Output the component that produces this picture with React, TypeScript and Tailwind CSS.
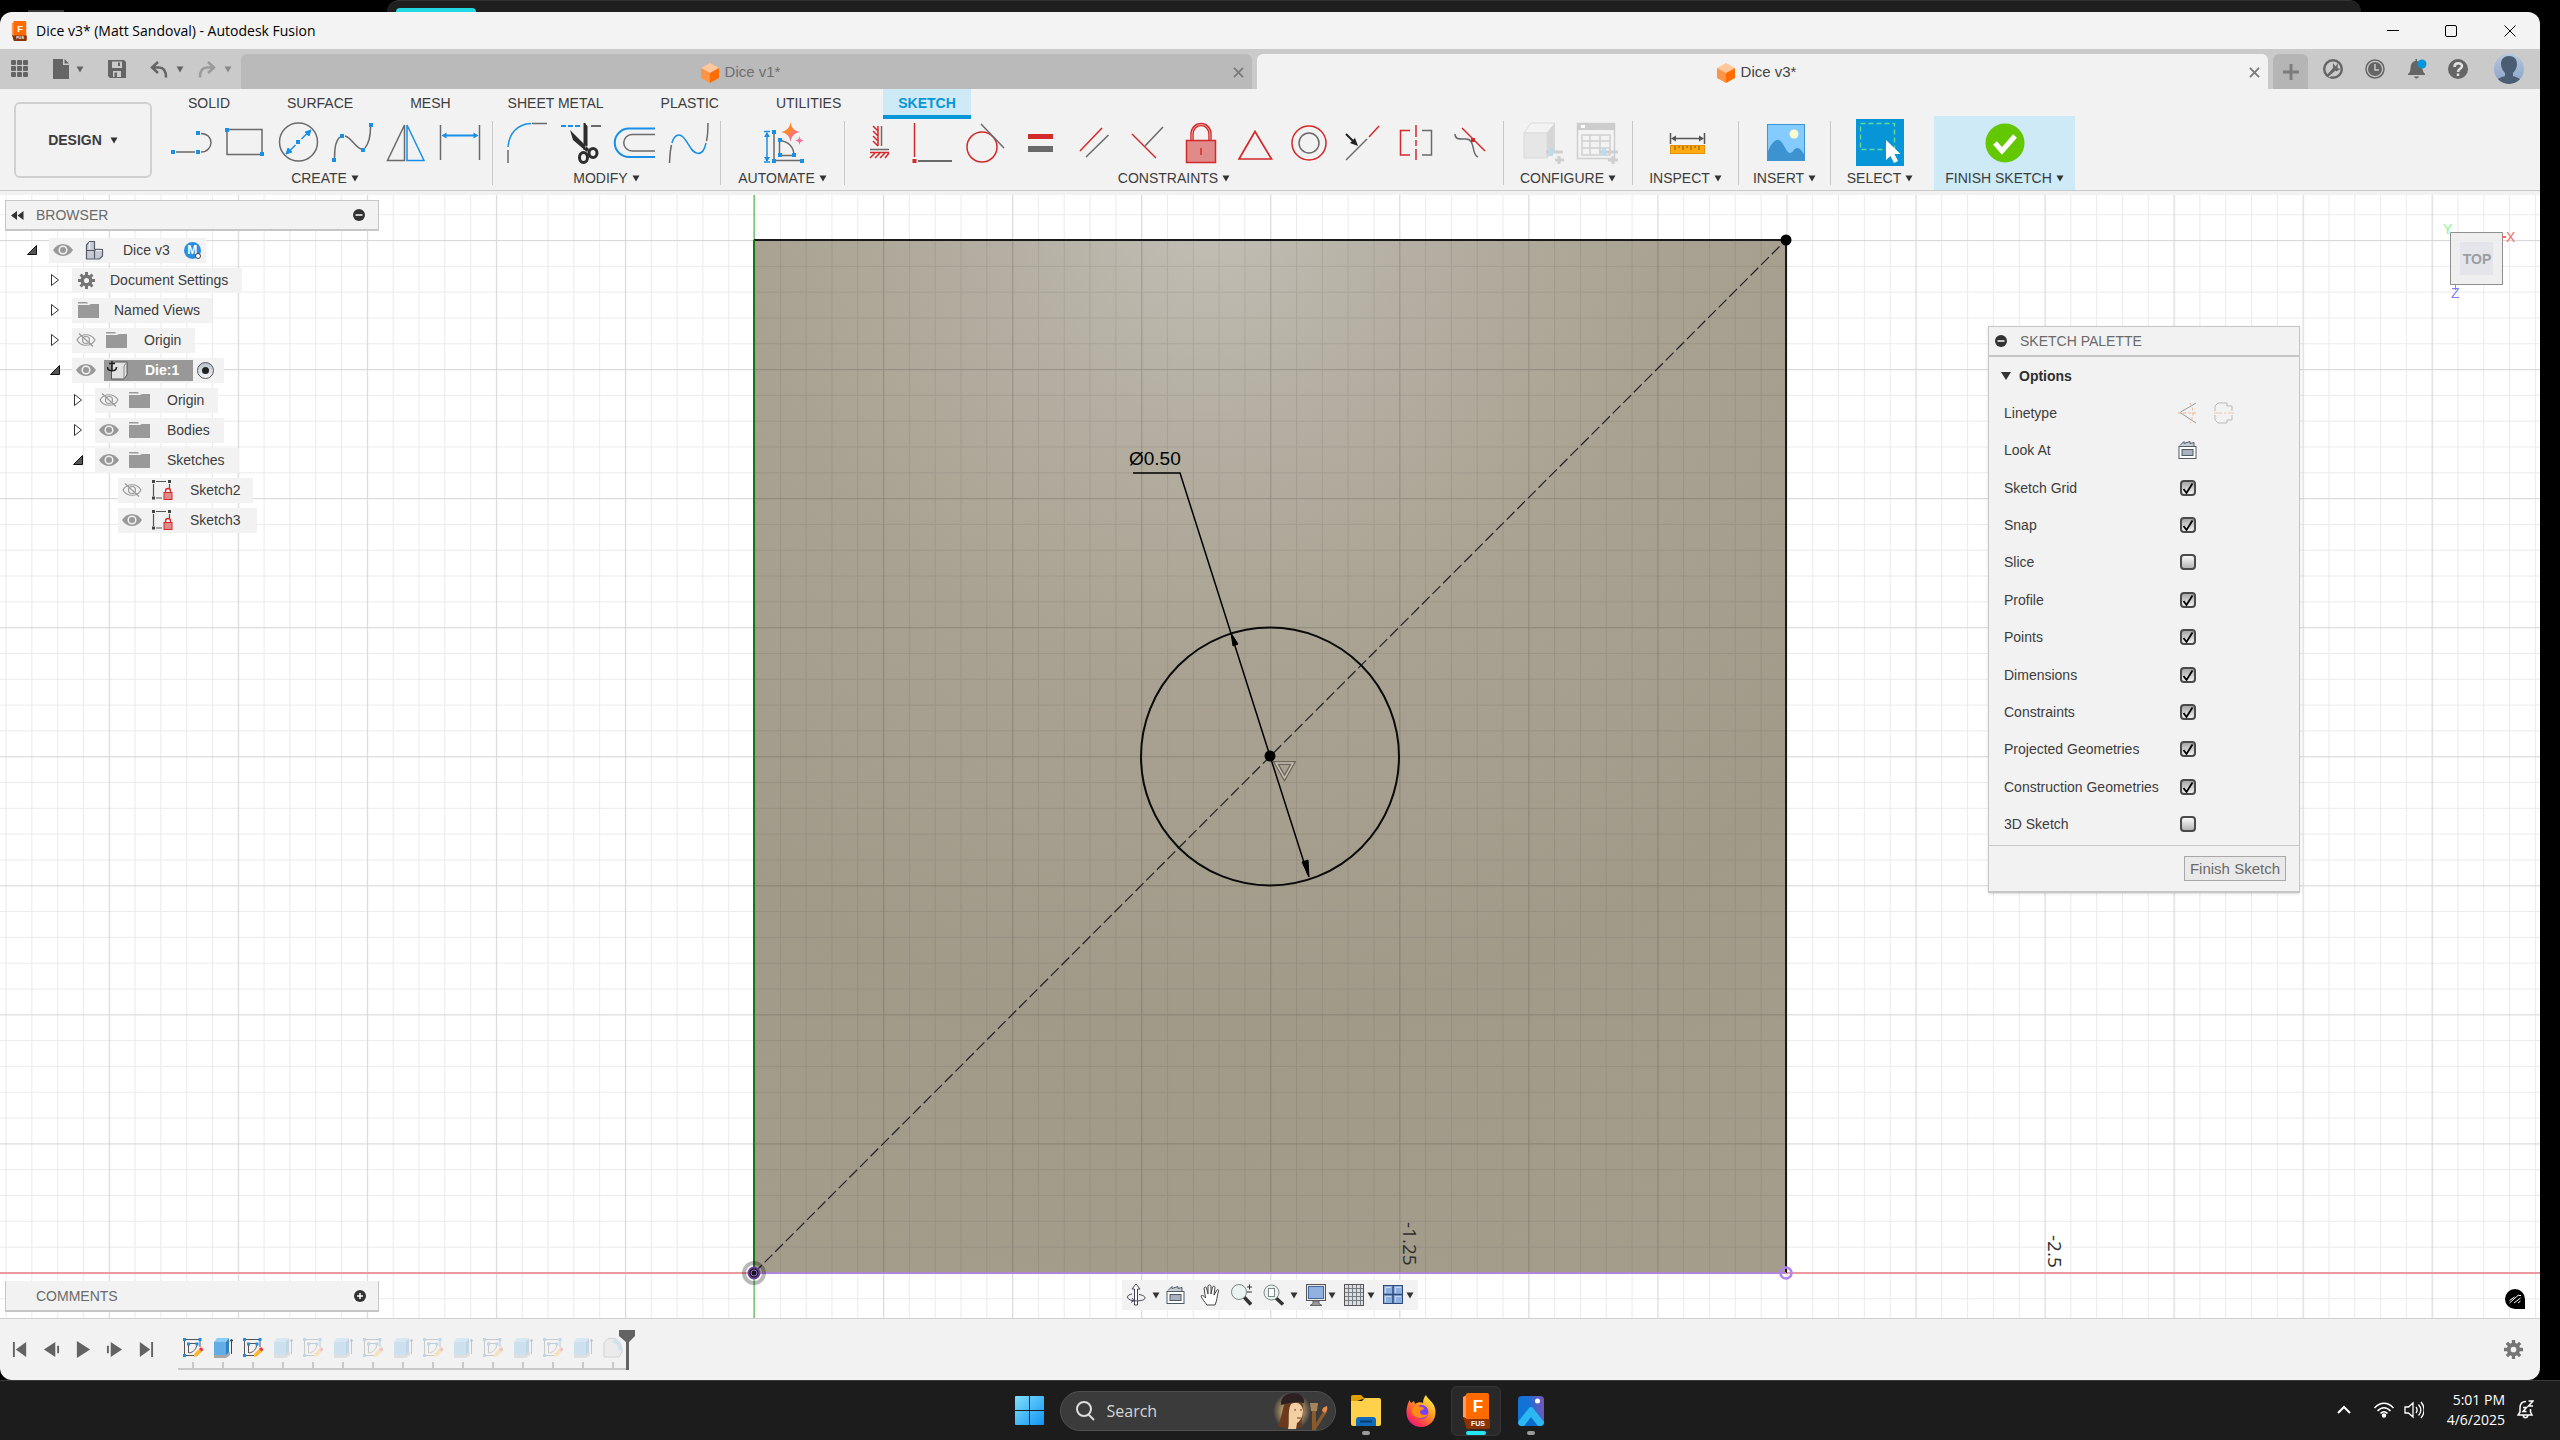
import React, { useState } from 'react';

type Icon = () => React.ReactElement;

const BLUE = '#1a8fe8';
const GRAY = '#6a6a6a';
const RED = '#d22a2a';

// ---------- shared bits ----------

const Caret: React.FC<{ className?: string }> = ({ className = 'text-[#333]' }) => (
  <svg viewBox="0 0 8 7" className={`h-[7px] w-2 shrink-0 ${className}`} aria-hidden="true">
    <path d="M0.5 0.5h7L4 6.5z" fill="currentColor" />
  </svg>
);

// Toolbar drawings share one 54x42 cell
const Cell: React.FC<{ children: React.ReactNode }> = ({ children }) => (
  <svg viewBox="0 0 54 42" className="h-[42px] w-[54px]" fill="none" strokeWidth="1.5" aria-hidden="true">
    {children}
  </svg>
);

const Dot: React.FC<{ x: number; y: number; fill?: string }> = ({ x, y, fill = BLUE }) => (
  <rect x={x - 2} y={y - 2} width="4" height="4" fill={fill} />
);

// ---------- toolbar icons ----------

const LineIcon: Icon = () => (
  <Cell>
    <path d="M11 30H30M36 30C42.500 30 46 25 46 20.500S42.500 11.500 36 11.500" stroke={GRAY} />
    <Dot x={8} y={30} /><Dot x={33} y={30} /><Dot x={33} y={11} />
  </Cell>
);

const RectIcon: Icon = () => (
  <Cell>
    <rect x="8" y="7.500" width="35" height="25" stroke={GRAY} />
    <Dot x={8} y={8} /><Dot x={43} y={32} />
  </Cell>
);

const CircleIcon: Icon = () => (
  <Cell>
    <circle cx="25.500" cy="20" r="19" stroke={GRAY} />
    <path d="M17 28.500L22.500 23M28.500 17L34 11.500" stroke={BLUE} />
    <path d="M13 32l2-6 4 4zM38 8l-2 6-4-4z" fill={BLUE} stroke={BLUE} strokeWidth="1" />
    <Dot x={25} y={20} />
  </Cell>
);

const SplineIcon: Icon = () => (
  <Cell>
    <path d="M7.500 36C7.500 27 9 18 13 15M18 14C25 16 27 24 34 27M38 26C42 21 43.500 13 43.500 5" stroke={GRAY} />
    <Dot x={7} y={38} /><Dot x={15} y={14} /><Dot x={36} y={28} /><Dot x={44} y={3} />
  </Cell>
);

const MirrorIcon: Icon = () => (
  <Cell>
    <path d="M23.500 3v35.500H6.500z" stroke={GRAY} />
    <path d="M26 3v35.500H43z" stroke={BLUE} />
  </Cell>
);

const DimensionIcon: Icon = () => (
  <Cell>
    <path d="M5.500 3v35M44.500 3v35" stroke={GRAY} />
    <path d="M9 13.500h32" stroke={BLUE} strokeWidth="2" />
    <path d="M6.500 13.500l5-3v6zM43.500 13.500l-5-3v6z" fill={BLUE} />
  </Cell>
);

const FilletIcon: Icon = () => (
  <Cell>
    <path d="M8 28v13M32 1.500H47" stroke={GRAY} />
    <path d="M8 25C9 12 17 2 31 1.500" stroke={BLUE} />
  </Cell>
);

const TrimIcon: Icon = () => (
  <Cell>
    <path d="M7 4h5M14 4h5M21 4h5" stroke={BLUE} strokeWidth="2" />
    <path d="M37 4h10" stroke={GRAY} strokeWidth="2" />
    <path d="M30.500 1l3 3v20l-3 3zM16 8l3 10 14 12 2-3z" fill="#2d2d2d" />
    <path d="M30.500 1v27" stroke="#2d2d2d" strokeWidth="2" />
    <ellipse cx="29.500" cy="35.500" rx="4" ry="5" stroke="#2d2d2d" strokeWidth="3" />
    <ellipse cx="39" cy="31" rx="4" ry="4.500" stroke="#2d2d2d" strokeWidth="3" />
  </Cell>
);

const OffsetIcon: Icon = () => (
  <Cell>
    <path d="M47 6.500H21a14 14 0 000 28.500H47" stroke={BLUE} strokeWidth="2" />
    <path d="M47 12.500H24a8 8 0 000 16.500H47" stroke={GRAY} />
  </Cell>
);

const ReshapeIcon: Icon = () => (
  <Cell>
    <path d="M7.500 41C8 33 8 29 9.500 23M44.500 19C46 12 46 8 46 1" stroke={GRAY} />
    <path d="M10 21C12 13 17 11 21 15C27 21 29 31 36 31.500C41 31.500 43 26 44 21" stroke={BLUE} />
  </Cell>
);

const AutomateIcon: Icon = () => (
  <Cell>
    <path d="M10 11v28M7 9.500h6M7 40h6" stroke={BLUE} />
    <path d="M10 10l3 5H7zM10 40l3-5H7z" fill={BLUE} />
    <path d="M17 12v26.500h26M22.500 19v14.500h14.500C37 25 31 19 22.500 18.500" stroke={GRAY} />
    <Dot x={17} y={10} /><Dot x={17} y={39} /><Dot x={45} y={39} />
    <Dot x={23} y={18} /><Dot x={23} y={33} /><Dot x={37} y={33} />
    <defs>
      <linearGradient id="spark" x1="0" x2="1" y1="0" y2="1">
        <stop offset="0.400" stopColor="#ff8a2b" />
        <stop offset="0.800" stopColor="#f75fb0" />
      </linearGradient>
    </defs>
    <path d="M33.500 0C34.500 6 37 8.500 43 10C37 11.500 34.500 14 33.500 20C32.500 14 30 11.500 24 10C30 8.500 32.500 6 33.500 0z" fill="url(#spark)" />
    <path d="M42.500 14C43 17 44 18 47 18.500C44 19 43 20 42.500 23C42 20 41 19 38 18.500C41 18 42 17 42.500 14z" fill="#f96a9d" />
  </Cell>
);

const HorizontalVerticalIcon: Icon = () => (
  <Cell>
    <path d="M26 4v20M21 4l5 5M21 9l5 5M21 14l5 5M21 19l5 5M18 30.500h19M23 31l-5 5M28 31l-5 5M33 31l-5 5M37 31l-4 5" stroke={RED} />
    <path d="M29.500 4v20M18 27.500h19" stroke={GRAY} />
  </Cell>
);

const CoincidentIcon: Icon = () => (
  <Cell>
    <path d="M8.500 1v34" stroke={RED} />
    <path d="M12 39h34" stroke={GRAY} strokeWidth="2" />
    <Dot x={8.5} y={39} fill={RED} />
  </Cell>
);

const TangentIcon: Icon = () => (
  <Cell>
    <circle cx="22" cy="25" r="15" stroke={RED} />
    <path d="M21 2L44 26" stroke={GRAY} />
  </Cell>
);

const EqualIcon: Icon = () => (
  <Cell>
    <rect x="14" y="12" width="25" height="5" fill={RED} />
    <rect x="14" y="24" width="25" height="6" fill={GRAY} />
  </Cell>
);

const ParallelIcon: Icon = () => (
  <Cell>
    <path d="M12 29L34 6" stroke={RED} />
    <path d="M18 35L40.500 13" stroke={GRAY} />
  </Cell>
);

const PerpendicularIcon: Icon = () => (
  <Cell>
    <path d="M10 12L34 36" stroke={RED} />
    <path d="M23 24L41 5" stroke={GRAY} />
  </Cell>
);

const LockIcon: Icon = () => (
  <Cell>
    <path d="M16 18V12a9 9.500 0 0118 0v6" stroke={RED} strokeWidth="3.500" />
    <path d="M16 18V12a9 9.500 0 0118 0v6" stroke="#f0a9a9" strokeWidth="1" />
    <rect x="10.500" y="18.500" width="29" height="22" fill="#e08a8a" stroke={RED} />
    <path d="M25 26v7" stroke={RED} />
  </Cell>
);

const MidpointIcon: Icon = () => (
  <Cell><path d="M25 9.500L41.500 37H9z" stroke={RED} strokeWidth="1.700" /></Cell>
);

const ConcentricIcon: Icon = () => (
  <Cell>
    <circle cx="25" cy="21" r="17" stroke={RED} />
    <circle cx="25" cy="21" r="10" stroke={GRAY} />
  </Cell>
);

const CollinearIcon: Icon = () => (
  <Cell>
    <path d="M41 4L31 15" stroke={RED} />
    <path d="M29 17L8 38" stroke={GRAY} />
    <path d="M8 12l7 7" stroke="#222" strokeWidth="2" />
    <path d="M20 24l-8-3 5-5z" fill="#222" />
  </Cell>
);

const SymmetryIcon: Icon = () => (
  <Cell>
    <path d="M18 8.500H8.500V33H18M24 3v12M24 18v6M24 27v11" stroke={RED} />
    <path d="M30 8.500h9.500V33H30" stroke={GRAY} />
  </Cell>
);

const CurvatureIcon: Icon = () => (
  <Cell>
    <path d="M9 12C9 18 14 17 20 17C30 17 25 33 32 35" stroke={GRAY} />
    <path d="M16 6L39 29" stroke={RED} />
    <Dot x={27} y={18} fill={RED} />
  </Cell>
);

const ConfigureIcon: Icon = () => (
  <Cell>
    <path d="M8 11L15 1h24l-8 10z" fill="#f3f3f3" stroke="#dadada" strokeWidth="1" />
    <path d="M31 11l8-10v28l-8 7z" fill="#d6d6d6" />
    <path d="M8 11h23v25H8z" fill="#e6e6e6" stroke="#dadada" strokeWidth="1" />
    <path d="M30 30h17M39 38h9M43 34v8" stroke="#cfcfcf" strokeWidth="3" />
    <path d="M35 26v8" stroke="#b9dcf2" strokeWidth="4" />
  </Cell>
);

const ConfigureTableIcon: Icon = () => (
  <Cell>
    <rect x="7.500" y="1.500" width="37" height="35" fill="#f3f3f3" stroke="#cfcfcf" />
    <path d="M7 1h38v7H7z" fill="#cdcdcd" />
    <path d="M11 3h4v3h-4z" fill="#fff" />
    <path d="M12 13h28v20H12zM12 19h28M12 26h28M20 13v20M30 13v20" stroke="#cfcfcf" />
    <path d="M29 30h19M38 38h10M43 34v8" stroke="#cfcfcf" strokeWidth="3" />
    <path d="M34 26v8" stroke="#b9dcf2" strokeWidth="4" />
  </Cell>
);

const InspectIcon: Icon = () => (
  <Cell>
    <rect x="10.500" y="23.500" width="34" height="8" fill="#ffab0f" stroke="#e39300" strokeWidth="1" />
    <path d="M15 24v4M19 24v2M23 24v4M27 24v2M31 24v4M35 24v2M39 24v4" stroke="#7a5200" strokeWidth="1" />
    <path d="M10.500 11v11M44.500 11v11M14 16.500h27" stroke="#555" />
    <path d="M11 16.500l5-3v6zM44 16.500l-5-3v6z" fill="#555" />
  </Cell>
);

const InsertIcon: Icon = () => (
  <Cell>
    <rect x="8.500" y="2.500" width="37" height="36" fill="#84ccff" stroke="#3f95d3" strokeWidth="1" />
    <circle cx="35" cy="12" r="4.500" fill="#fdfbd0" />
    <path d="M9 29C13 20 17 17 20 18C25 20 27 31 31 31C34 31 35 26 38 26C41 26 43 29 45 32V38H9z" fill="#3d93cf" />
  </Cell>
);

const SelectIcon: Icon = () => (
  <svg viewBox="0 0 48 47" className="h-[47px] w-12" fill="none" aria-hidden="true">
    <rect width="48" height="47" fill="#0696d7" />
    <rect x="4.500" y="4.500" width="34" height="26" stroke="#63d89b" strokeWidth="1.500" strokeDasharray="5 3" />
    <path d="M30 21v20l4.500-4 3.500 7 4-2-3.500-7h6z" fill="#fff" />
  </svg>
);

const FinishIcon: Icon = () => (
  <Cell>
    <circle cx="27" cy="21" r="19.500" fill="#63c702" />
    <path d="M17 21l7 8 13-15" stroke="#fff" strokeWidth="5" />
  </Cell>
);

interface Tool {
  name: string;
  icon: Icon;
}

interface Group {
  label: string;
  width: string;
  tools: Tool[];
}

const groups: Group[] = [
  {
    label: 'CREATE',
    width: 'w-[334px]',
    tools: [
      { name: 'Line', icon: LineIcon },
      { name: 'Rectangle', icon: RectIcon },
      { name: 'Circle', icon: CircleIcon },
      { name: 'Spline', icon: SplineIcon },
      { name: 'Mirror', icon: MirrorIcon },
      { name: 'Sketch Dimension', icon: DimensionIcon },
    ],
  },
  {
    label: 'MODIFY',
    width: 'w-[227px]',
    tools: [
      { name: 'Fillet', icon: FilletIcon },
      { name: 'Trim', icon: TrimIcon },
      { name: 'Offset', icon: OffsetIcon },
      { name: 'Reshape', icon: ReshapeIcon },
    ],
  },
  { label: 'AUTOMATE', width: 'w-[123px]', tools: [{ name: 'AutoConstrain', icon: AutomateIcon }] },
  {
    label: 'CONSTRAINTS',
    width: 'w-[658px]',
    tools: [
      { name: 'Horizontal/Vertical', icon: HorizontalVerticalIcon },
      { name: 'Coincident', icon: CoincidentIcon },
      { name: 'Tangent', icon: TangentIcon },
      { name: 'Equal', icon: EqualIcon },
      { name: 'Parallel', icon: ParallelIcon },
      { name: 'Perpendicular', icon: PerpendicularIcon },
      { name: 'Fix/Unfix', icon: LockIcon },
      { name: 'Midpoint', icon: MidpointIcon },
      { name: 'Concentric', icon: ConcentricIcon },
      { name: 'Collinear', icon: CollinearIcon },
      { name: 'Symmetry', icon: SymmetryIcon },
      { name: 'Curvature', icon: CurvatureIcon },
    ],
  },
  {
    label: 'CONFIGURE',
    width: 'w-[128px]',
    tools: [
      { name: 'Configure', icon: ConfigureIcon },
      { name: 'Configuration Table', icon: ConfigureTableIcon },
    ],
  },
  { label: 'INSPECT', width: 'w-[105px]', tools: [{ name: 'Measure', icon: InspectIcon }] },
  { label: 'INSERT', width: 'w-[91px]', tools: [{ name: 'Insert Canvas', icon: InsertIcon }] },
];

// ---------- title bar and document tabs ----------

const FusionLogo: React.FC<{ className: string; sub: string }> = ({ className, sub }) => (
  <svg viewBox="0 0 28 36" className={className} aria-hidden="true">
    <path d="M1 4L6 1v25l-5-2z" fill="#ff9a5a" />
    <path d="M4 2a2 2 0 012-2h19a2 2 0 012 2v25H4z" fill="#ff6b00" />
    <path d="M1 24l3 2h24v8a2 2 0 01-2 2H6a2 2 0 01-2-2z" fill="#8a3200" />
    <text x="16" y="19" textAnchor="middle" fontSize="17" fontWeight="700" fill="#fff" fontFamily="Liberation Sans, sans-serif">F</text>
    <text x="16" y="33" textAnchor="middle" fontSize="7" fontWeight="700" fill="#fff" fontFamily="Liberation Sans, sans-serif">{sub}</text>
  </svg>
);

const Cube: React.FC = () => (
  <svg viewBox="0 0 18 20" className="h-5 w-[18px]" aria-hidden="true">
    <path d="M9 0l9 5-9 5-9-5z" fill="#ffc79b" />
    <path d="M0 5l9 5v10l-9-5z" fill="#ff9447" />
    <path d="M18 5l-9 5v10l9-5z" fill="#ff6c00" />
  </svg>
);

const TitleBar: React.FC = () => (
  <header className="flex h-[37px] items-center bg-[#f3f3f3] pl-[10px] text-black">
    <FusionLogo className="h-5 w-[18px]" sub="FUS" />
    <h1 className="ml-2 flex-1 font-['Open_Sans',sans-serif] text-sm">Dice v3* (Matt Sandoval) - Autodesk Fusion</h1>
    <button aria-label="Minimize" className="flex h-full w-[58px] items-center justify-center">
      <span className="h-px w-3 bg-black" />
    </button>
    <button aria-label="Maximize" className="flex h-full w-[58px] items-center justify-center">
      <span className="h-3 w-3 rounded-xs border border-black" />
    </button>
    <button aria-label="Close" className="flex h-full w-[60px] items-center justify-center">
      <svg viewBox="0 0 12 12" className="h-3 w-3" stroke="#000" aria-hidden="true"><path d="M0.500 0.500l11 11M11.500 0.500l-11 11" /></svg>
    </button>
  </header>
);

const DocTab: React.FC<{ title: string; active?: boolean }> = ({ title, active }) => (
  <div className={`flex h-[35px] flex-1 items-center rounded-t-md px-2 pt-[2px] ${active ? 'bg-[#f2f2f2] text-[#444]' : 'bg-[#bababa] text-[#6f6f6f]'}`}>
    <button className="flex flex-1 items-center justify-center gap-[6px] text-[15px]">
      <Cube />
      {title}
    </button>
    <button aria-label={`Close ${title}`} className="flex w-3 justify-center">
      <svg viewBox="0 0 12 12" className="h-[11px] w-[11px]" stroke="#7a7a7a" strokeWidth="2" aria-hidden="true"><path d="M1 1l10 10M11 1L1 11" /></svg>
    </button>
  </div>
);

const QuickAccess: React.FC = () => (
  <div className="flex w-[241px] items-center pl-[10px] text-[#656565]">
    <button aria-label="Show data panel">
      <svg viewBox="0 0 20 20" className="h-5 w-5" fill="currentColor" aria-hidden="true">
        {[1, 7, 13].map((y) => [1, 7, 13].map((x) => <rect key={`${x}-${y}`} x={x} y={y} width="5" height="5" rx="1" />))}
      </svg>
    </button>
    <button aria-label="File" className="ml-[22px] flex items-center gap-[6px]">
      <svg viewBox="0 0 18 20" className="h-5 w-[18px]" fill="currentColor" aria-hidden="true">
        <path d="M1 0h10v6h6v14H1zM12.500 0L17 4.500h-4.500z" />
      </svg>
      <Caret className="text-[#656565]" />
    </button>
    <button aria-label="Save" className="ml-6">
      <svg viewBox="0 0 18 18" className="h-[18px] w-[18px]" aria-hidden="true">
        <path d="M0 0h16l2 2v16H2l-2-2z" fill="currentColor" />
        <path d="M4 1.500h10V8H4zM5 11h8v6H5z" fill="#cacaca" />
        <path d="M10 2.500h2V6h-2zM6.500 12.500H9V17H6.500z" fill="currentColor" />
      </svg>
    </button>
    <button aria-label="Undo" className="ml-6 flex items-center gap-2">
      <svg viewBox="0 0 18 17" className="h-[17px] w-[18px]" fill="none" stroke="currentColor" strokeWidth="2.500" aria-hidden="true">
        <path d="M8 1L2 6.500 8 12M3 6.500h6c5 0 7 4 7 10" />
      </svg>
      <Caret className="text-[#656565]" />
    </button>
    <button aria-label="Redo" className="ml-[14px] flex items-center gap-2 text-[#9a9a9a]">
      <svg viewBox="0 0 18 17" className="h-[17px] w-[18px]" fill="none" stroke="currentColor" strokeWidth="2.500" aria-hidden="true">
        <path d="M10 1l6 5.500L10 12M15 6.500H9c-5 0-7 4-7 10" />
      </svg>
      <Caret className="text-[#8a8a8a]" />
    </button>
  </div>
);

const AccountIcons: React.FC = () => (
  <div className="flex w-[232px] items-center justify-between pr-4 pl-[15px] text-[#656565]">
    <button aria-label="Extensions">
      <svg viewBox="0 0 20 20" className="h-5 w-5" fill="none" aria-hidden="true">
        <circle cx="10" cy="10" r="8.800" stroke="currentColor" strokeWidth="2.400" />
        <path d="M3 17l7-8V4l2.500 3.500L15 4l-0.500 5 3 1-5 3-7 5z" fill="currentColor" />
        <path d="M6 18l7-6" stroke="#cacaca" strokeWidth="1.500" />
      </svg>
    </button>
    <button aria-label="Job status">
      <svg viewBox="0 0 20 20" className="h-5 w-5" fill="none" aria-hidden="true">
        <circle cx="10" cy="10" r="9" stroke="currentColor" strokeWidth="1.500" />
        <circle cx="10" cy="10" r="7" fill="currentColor" />
        <path d="M10 5v6h4" stroke="#cacaca" strokeWidth="1.500" />
      </svg>
    </button>
    <button aria-label="Notifications">
      <svg viewBox="0 0 20 20" className="h-5 w-5" aria-hidden="true">
        <path d="M1 15c3-2 2-5 3-9 1-3 3-4 4.500-4V0H10v2c3 0 4.500 3 5 6s1 5 3 7v1H1zM7 17.500h5c-1 2.500-4 2.500-5 0z" fill="currentColor" />
        <circle cx="15" cy="5" r="4.500" fill="#0696d7" />
      </svg>
    </button>
    <button aria-label="Help">
      <svg viewBox="0 0 20 20" className="h-5 w-5" fill="none" aria-hidden="true">
        <circle cx="10" cy="10" r="10" fill="currentColor" />
        <path d="M6.500 8c0-5 7.500-4.500 7.500-1 0 3-4 2.500-4 6M10 14.500V17" stroke="#e2e2e2" strokeWidth="2.500" />
      </svg>
    </button>
    <button aria-label="Profile" className="ml-1">
      <svg viewBox="0 0 30 30" className="h-[30px] w-[30px]" aria-hidden="true">
        <defs>
          <linearGradient id="avatar" x1="0" x2="0" y1="0" y2="1">
            <stop offset="0" stopColor="#b3c6e0" />
            <stop offset="1" stopColor="#8ba3c6" />
          </linearGradient>
          <clipPath id="round"><circle cx="15" cy="15" r="15" /></clipPath>
        </defs>
        <g clipPath="url(#round)">
          <rect width="30" height="30" fill="url(#avatar)" />
          <path d="M15 2c5 0 8 3 8 8 0 4-2 7-4 9v3c3 1 7 2 8 5v5H3v-5c1-3 5-4 8-5v-3C9 17 7 14 7 10c0-5 3-8 8-8z" fill="#4b5d73" />
        </g>
      </svg>
    </button>
  </div>
);

const TabBar: React.FC = () => (
  <div className="flex h-10 items-stretch bg-[#cacaca]">
    <QuickAccess />
    <div className="flex flex-1 items-end gap-[5px]">
      <DocTab title="Dice v1*" />
      <DocTab title="Dice v3*" active />
      <button aria-label="New tab" className="flex h-[35px] w-[35px] items-center justify-center rounded-t-md bg-[#b5b5b5]">
        <svg viewBox="0 0 16 16" className="h-4 w-4" stroke="#7c7c7c" strokeWidth="3" aria-hidden="true"><path d="M8 0v16M0 8h16" /></svg>
      </button>
    </div>
    <AccountIcons />
  </div>
);

// ---------- ribbon ----------

const ribbonTabs = ['SOLID', 'SURFACE', 'MESH', 'SHEET METAL', 'PLASTIC', 'UTILITIES'];

const GroupLabel: React.FC<{ label: string }> = ({ label }) => (
  <button className="flex h-[22px] items-center gap-1 whitespace-nowrap">
    {label}
    <Caret />
  </button>
);

const Ribbon: React.FC = () => (
  <div className="h-[106px] border-b-4 border-[#f2f2f2] bg-[#f2f2f2] text-sm text-[#3c3c3c]">
    <div className="flex h-full border-b border-[#c8c8c8]">
      <button className="mt-[13px] ml-[14px] flex h-[76px] w-[138px] items-center justify-center gap-2 rounded-md border-2 border-[#d0d0d0] font-bold">
        DESIGN
        <Caret />
      </button>
      <div className="flex flex-1 flex-col">
        <nav className="flex h-[27px] shrink-0 items-start gap-[27px] pl-[21px]">
          {ribbonTabs.map((tab) => (
            <button key={tab} className="h-[30px] px-[15px] pb-[2px]">{tab}</button>
          ))}
          <button className="h-[30px] border-b-4 border-[#0696d7] bg-[#cdeaf6] px-[15px] pt-[2px] font-bold text-[#0696d7]">SKETCH</button>
        </nav>
        <div className="flex flex-1 pl-[6px]">
          {groups.map((group) => (
            <div key={group.label} className="flex">
              <div className={`flex flex-col items-center pt-[2px] ${group.width}`}>
                <div className="flex h-[49px] items-center pl-[3px]">
                  {group.tools.map(({ name, icon: ToolIcon }) => (
                    <button key={name} aria-label={name}><ToolIcon /></button>
                  ))}
                </div>
                <GroupLabel label={group.label} />
              </div>
              <span className="h-16 w-px self-center bg-[#c8c8c8]" />
            </div>
          ))}
          <div className="flex w-[103px] flex-col items-center pt-[2px] pr-[5px]">
            <button aria-label="Select" className="flex h-[49px] items-center"><SelectIcon /></button>
            <GroupLabel label="SELECT" />
          </div>
          <div className="flex w-[141px] flex-col items-center bg-[#cdeaf6] pt-[2px]">
            <button aria-label="Finish Sketch" className="flex h-[49px] items-center"><FinishIcon /></button>
            <GroupLabel label="FINISH SKETCH" />
          </div>
        </div>
      </div>
    </div>
  </div>
);

// ---------- browser tree ----------

const Eye: React.FC<{ off?: boolean }> = ({ off }) => (
  <svg viewBox="0 0 20 14" className="h-[14px] w-5" aria-hidden="true">
    {off ? (
      <g fill="none" stroke="#999" strokeWidth="1.200">
        <path d="M1 7C5 0 15 0 19 7C15 14 5 14 1 7zM3 0.500l14 13" />
        <circle cx="10" cy="7" r="3.500" />
      </g>
    ) : (
      <>
        <path d="M0 7C5-1 15-1 20 7C15 15 5 15 0 7z" fill="#999" />
        <circle cx="10" cy="7" r="3.800" fill="none" stroke="#f2f2f2" strokeWidth="1.500" />
      </>
    )}
  </svg>
);

const GearIcon: React.FC<{ className: string }> = ({ className }) => (
  <svg viewBox="0 0 20 20" className={className} fill="none" stroke="#757575" aria-hidden="true">
    <circle cx="10" cy="10" r="5" strokeWidth="4" />
    <path d="M10 0v4M10 16v4M0 10h4M16 10h4M3 3l2.800 2.800M14.200 14.200L17 17M3 17l2.800-2.800M14.200 5.800L17 3" strokeWidth="3.500" />
  </svg>
);

const FolderIcon: Icon = () => (
  <svg viewBox="0 0 21 16" className="h-4 w-[21px]" fill="#999" aria-hidden="true">
    <path d="M0 0h9l1 1.500H0zM0 3h11l2-1h8v14H0z" />
  </svg>
);

const ComponentIcon: Icon = () => (
  <svg viewBox="0 0 20 20" className="h-5 w-5" stroke="#555b66" strokeWidth="1.200" aria-hidden="true">
    <path d="M1.500 5l3-3.500h5V9l8 0.500V16l-3 3h-13z" fill="#c6cad3" />
    <path d="M1.500 10.500h8M9.500 18.500V10l8-0.500" fill="none" />
    <path d="M4.500 2v7M11 10.500h6" stroke="#f2f4f8" />
  </svg>
);

const SketchLockIcon: Icon = () => (
  <svg viewBox="0 0 21 20" className="h-5 w-[21px]" fill="none" aria-hidden="true">
    <path d="M4 1.500h10M1.500 4v12M4 18h6M17.500 4v5" stroke="#555" strokeWidth="1.200" />
    <path d="M0 0h3v3H0zM16 0h3v3h-3zM0 16.500h3v3H0z" fill="#444" />
    <path d="M13.500 13v-2a2.500 2.500 0 015 0v2" stroke={RED} strokeWidth="1.300" />
    <rect x="12" y="12.500" width="8" height="7" fill="#e08a8a" stroke={RED} />
  </svg>
);

const AnchorIcon: Icon = () => (
  <svg viewBox="0 0 21 20" className="h-5 w-[21px]" fill="none" aria-hidden="true">
    <path d="M4.500 5L8 2h12v13l-3 4H4.500z" fill="#e2e2e2" stroke="#555" />
    <path d="M17 19V6l3-4" stroke="#888" />
    <path d="M5 1v10M2 3.500h6M0.500 7c0 5 9 5 9 0" stroke="#222" strokeWidth="1.500" />
  </svg>
);

interface Node {
  name: string;
  indent: string;
  open?: boolean;
  leaf?: boolean;
  eye?: 'on' | 'off';
  icon: Icon;
  gap: string;
  end: string;
}

const SettingsIcon: Icon = () => <GearIcon className="h-[17px] w-[17px]" />;

const nodes: Node[] = [
  { name: 'Document Settings', indent: 'pl-[45px]', icon: SettingsIcon, gap: 'gap-[15px]', end: 'pr-[14px]' },
  { name: 'Named Views', indent: 'pl-[45px]', icon: FolderIcon, gap: 'gap-[15px]', end: 'pr-[12px]' },
  { name: 'Origin', indent: 'pl-[45px]', eye: 'off', icon: FolderIcon, gap: 'gap-[17px]', end: 'pr-[14px]' },
  { name: 'Die:1', indent: 'pl-[45px]', open: true, eye: 'on', icon: AnchorIcon, gap: 'gap-[17px]', end: 'pr-[10px]' },
  { name: 'Origin', indent: 'pl-[68px]', eye: 'off', icon: FolderIcon, gap: 'gap-[17px]', end: 'pr-[14px]' },
  { name: 'Bodies', indent: 'pl-[68px]', eye: 'on', icon: FolderIcon, gap: 'gap-[17px]', end: 'pr-[14px]' },
  { name: 'Sketches', indent: 'pl-[68px]', open: true, eye: 'on', icon: FolderIcon, gap: 'gap-[17px]', end: 'pr-[14px]' },
  { name: 'Sketch2', indent: 'pl-[91px]', leaf: true, eye: 'off', icon: SketchLockIcon, gap: 'gap-[17px]', end: 'pr-[12px]' },
  { name: 'Sketch3', indent: 'pl-[91px]', leaf: true, eye: 'on', icon: SketchLockIcon, gap: 'gap-[17px]', end: 'pr-[16px]' },
];

const Twisty: React.FC<{ open?: boolean }> = ({ open }) => (
  <svg viewBox="0 0 10 12" className="h-3 w-[10px]" aria-hidden="true">
    {open ? <path d="M9.500 1.500v9h-9z" fill="#555" stroke="#111" /> : <path d="M1.500 0.500v11L8.500 6z" fill="#fff" stroke="#333" />}
  </svg>
);

const TreeRow: React.FC<{ node: Node }> = ({ node }) => {
  const NodeIcon = node.icon;
  const selected = node.name === 'Die:1';
  return (
    <li className={`flex h-[30px] items-center ${node.indent}`}>
      <button aria-label={`Toggle ${node.name}`} className="mr-3 w-[10px]">
        {!node.leaf && <Twisty open={node.open} />}
      </button>
      <div className={`flex h-[25px] items-center bg-[#f2f2f2] pl-1 ${node.end}`}>
        {node.eye && (
          <button aria-label={`Visibility of ${node.name}`} className="mr-2">
            <Eye off={node.eye === 'off'} />
          </button>
        )}
        {selected ? (
          <>
            <span className="flex h-[21px] items-center gap-[17px] bg-[#989898] pr-[14px] pl-[3px] font-bold text-white">
              <NodeIcon />
              {node.name}
            </span>
            <span className="relative ml-1 flex items-center justify-center">
              <input type="radio" defaultChecked aria-label="Activate component" className="peer h-[17px] w-[17px] appearance-none rounded-full border border-[#555] bg-linear-to-b from-[#b9bfcc] to-[#f5f7fa]" />
              <span className="pointer-events-none absolute hidden h-[7px] w-[7px] rounded-full bg-[#222] peer-checked:block" />
            </span>
          </>
        ) : (
          <span className={`flex items-center pl-[2px] ${node.gap}`}>
            <NodeIcon />
            {node.name}
          </span>
        )}
      </div>
    </li>
  );
};

const RoundToggle: React.FC<{ plus?: boolean; label: string }> = ({ plus, label }) => (
  <button aria-label={label}>
    <svg viewBox="0 0 12 12" className="h-3 w-3" aria-hidden="true">
      <circle cx="6" cy="6" r="6" fill="#333" />
      <path d={plus ? 'M3 6h6M6 3v6' : 'M2.500 6h7'} stroke="#fff" strokeWidth="1.500" />
    </svg>
  </button>
);

const Browser: React.FC = () => (
  <aside className="absolute top-[5px] left-[5px] w-[374px] text-sm text-[#3c3c3c]">
    <header className="flex h-[31px] items-center border border-b-2 border-[#c6c6c6] bg-[#f2f2f2] pr-[13px] pl-[5px] text-[#6a6a6a]">
      <svg viewBox="0 0 13 9" className="mr-3 h-[9px] w-[13px]" fill="#333" aria-hidden="true"><path d="M6 0v9L0 4.500zM12.500 0v9l-6-4.500z" /></svg>
      <h2 className="flex-1">BROWSER</h2>
      <RoundToggle label="Collapse browser" />
    </header>
    <ul className="pt-1">
      <li className="flex h-[30px] items-center pl-[22px]">
        <button aria-label="Toggle Dice v3" className="mr-3 w-[10px]"><Twisty open /></button>
        <div className="flex h-[25px] items-center bg-[#f2f2f2] pr-[5px] pl-1">
          <button aria-label="Visibility of Dice v3" className="mr-3"><Eye /></button>
          <ComponentIcon />
          <span className="mr-[14px] ml-[18px]">Dice v3</span>
          <span className="relative flex h-[17px] w-[17px] items-center justify-center rounded-full bg-[#2b8fdd] text-xs font-bold text-white">
            M
            <span className="absolute right-0 bottom-0 h-[6px] w-[6px] rounded-full border border-[#444] bg-white" />
          </span>
        </div>
      </li>
      {nodes.map((node, i) => (
        <TreeRow key={i} node={node} />
      ))}
    </ul>
  </aside>
);

// ---------- sketch canvas ----------

// 1 major grid cell = 129 px, split in 5; the body is 8 cells wide
const Sketch: React.FC = () => (
  <svg className="absolute inset-0 h-full w-full" aria-label="Sketch canvas">
    <defs>
      <pattern id="minor" width="25.810" height="25.810" patternUnits="userSpaceOnUse" x="754" y="45">
        <path d="M0 0.500H26M0.500 0V26" stroke="#000" strokeOpacity="0.080" fill="none" />
      </pattern>
      <pattern id="major" width="129.050" height="129.050" patternUnits="userSpaceOnUse" x="754" y="45">
        <path d="M0 0.500H130M0.500 0V130" stroke="#000" strokeOpacity="0.080" strokeWidth="1.500" fill="none" />
      </pattern>
      <radialGradient id="body" gradientUnits="userSpaceOnUse" cx="1210" cy="20" r="1150">
        <stop offset="0" stopColor="#c2beb4" />
        <stop offset="0.180" stopColor="#b4afa2" />
        <stop offset="0.400" stopColor="#a9a292" />
        <stop offset="0.700" stopColor="#a29a89" />
        <stop offset="1" stopColor="#a59d8c" />
      </radialGradient>
    </defs>
    <path d="M754 0v1123" stroke="#90e890" strokeWidth="2" />
    <rect x="754" y="45" width="1032" height="1033" fill="url(#body)" />
    <rect width="100%" height="100%" fill="url(#minor)" />
    <rect width="100%" height="100%" fill="url(#major)" />
    <path d="M0 1078h2540" stroke="#ea9a9f" strokeWidth="2" />
    <path d="M754 45h1032v1033" stroke="#1a1a1a" strokeWidth="2" fill="none" />
    <path d="M754 45v1033" stroke="#137a13" strokeWidth="2" />
    <path d="M754 1078h1032" stroke="#b084d8" strokeWidth="2" />
    <path d="M754 1078L1786 45" stroke="#222" strokeWidth="1.200" strokeDasharray="11 4" />
    <circle cx="1270" cy="561.500" r="129" fill="none" stroke="#0a0a0a" strokeWidth="2" />
    <path d="M1133 278h47l90 283 38 119" stroke="#000" strokeWidth="1.500" fill="none" />
    <path d="M1231 438l7 11-5 2zM1309 682l-7-15 6-2z" stroke="#000" fill="#000" />
    <circle cx="1270" cy="561" r="5.500" />
    <circle cx="1786" cy="45" r="5.500" />
    <path d="M1276 568h17l-8.500 15z" fill="none" stroke="#6b6659" strokeWidth="4" />
    <path d="M1276 568h17l-8.500 15z" fill="none" stroke="#c9c5b9" strokeWidth="1.500" />
    <circle cx="754" cy="1078" r="10" fill="none" stroke="#000" strokeOpacity="0.280" strokeWidth="4" />
    <circle cx="754" cy="1078" r="5.500" fill="#15101c" stroke="#6a3fa0" strokeWidth="2" />
    <circle cx="754" cy="1078" r="3" fill="none" stroke="#9a7cc4" />
    <circle cx="1786" cy="1078" r="5.500" fill="none" stroke="#b183f0" strokeWidth="2.500" />
    <text x="1129" y="270" fontSize="19" fontFamily="Liberation Sans, sans-serif">Ø0.50</text>
    <g fontSize="19" fontFamily="Open Sans, sans-serif" fill="#2f2f2f">
      <text transform="translate(1403 1027) rotate(90)">-1.25</text>
      <text transform="translate(2048 1040) rotate(90)">-2.5</text>
    </g>
  </svg>
);

const ViewCube: React.FC = () => (
  <div className="absolute top-5 right-6 h-[86px] w-20">
    <svg viewBox="-4 -10 80 86" className="h-full w-full" fontFamily="Liberation Sans, sans-serif" aria-label="View cube">
      <path d="M10.500 7.500h52v52h-52z" fill="#ededed" fillOpacity="0.900" stroke="#8f8f8f" />
      <path d="M20 17h33v33H20z" fill="#e4e5ea" />
      <text x="37" y="39" textAnchor="middle" fontSize="14" fontWeight="700" fill="#9a9da3">TOP</text>
      <path d="M62 12h4" stroke="#f66" strokeWidth="2" />
      <text x="66" y="17" fontSize="14" fill="#f56c6c">X</text>
      <text x="3" y="9" fontSize="14" fill="#8df58d">Y</text>
      <path d="M15.500 60v5" stroke="#88f" />
      <text x="11" y="73" fontSize="14" fill="#7f7ff5">Z</text>
    </svg>
  </div>
);

// ---------- sketch palette ----------

const defaultOptions = [
  { label: 'Sketch Grid', on: true },
  { label: 'Snap', on: true },
  { label: 'Slice', on: false },
  { label: 'Profile', on: true },
  { label: 'Points', on: true },
  { label: 'Dimensions', on: true },
  { label: 'Constraints', on: true },
  { label: 'Projected Geometries', on: true },
  { label: 'Construction Geometries', on: true },
  { label: '3D Sketch', on: false },
];

const LookAtIcon: Icon = () => (
  <svg viewBox="0 0 20 20" className="h-5 w-5" fill="none" stroke="#4e5866" aria-hidden="true">
    <path d="M2 5.500L6 1.500v2l6-2v2l4-1v4" fill="#c7ccd4" />
    <rect x="1" y="6.500" width="17" height="12" fill="#fff" />
    <rect x="4" y="9.500" width="11" height="6" fill="#aab2c0" />
  </svg>
);

const Palette: React.FC = () => {
  const [options, setOptions] = useState(defaultOptions);

  const toggle = (label: string) =>
    setOptions(options.map((o) => (o.label === label ? { ...o, on: !o.on } : o)));

  return (
    <section className="absolute top-[131px] right-[240px] w-[312px] border border-b-2 border-[#c6c6c6] bg-[#f2f2f2] text-sm text-[#3c3c3c] shadow-sm">
      <header className="flex h-[30px] items-center gap-[13px] border-b-2 border-[#c6c6c6] pl-[6px] text-[#6a6a6a]">
        <RoundToggle label="Collapse palette" />
        <h2>SKETCH PALETTE</h2>
      </header>
      <button className="flex h-[37px] items-center gap-2 pl-3 font-bold text-[#2f2f2f]">
        <svg viewBox="0 0 10 8" className="h-2 w-[10px]" fill="#333" aria-hidden="true"><path d="M0 0h10L5 8z" /></svg>
        Options
      </button>
      <div className="grid h-[451px] auto-rows-fr pb-[2px] pl-[15px]">
        <div className="flex items-center">
          <span className="w-[174px]">Linetype</span>
          <button aria-label="Construction">
            <svg viewBox="0 0 20 22" className="h-[22px] w-5" fill="none" aria-hidden="true">
              <path d="M18 1L2 10.500 18 21" stroke="#9c9c9c" />
              <path d="M0 11h20M12 1c4 6 4 14 0 20" stroke="#edb58c" strokeDasharray="3 2" />
            </svg>
          </button>
          <button aria-label="Centerline" className="ml-4">
            <svg viewBox="0 0 20 22" className="h-[22px] w-5" fill="none" aria-hidden="true">
              <path d="M1 9V4l3-3h9v3h5v5M1 13v5l3 3h9v-3h5v-5" stroke="#b9b9b9" />
              <path d="M0 11h20" stroke="#f0c6aa" strokeDasharray="8 2 2 2" />
            </svg>
          </button>
        </div>
        <div className="flex items-center">
          <span className="w-[174px]">Look At</span>
          <button aria-label="Look At"><LookAtIcon /></button>
        </div>
        {options.map((option) => (
          <label key={option.label} className="flex items-center">
            <span className="w-[176px]">{option.label}</span>
            <span className="relative flex">
              <input
                type="checkbox"
                checked={option.on}
                onChange={() => toggle(option.label)}
                className="peer h-4 w-4 appearance-none rounded-sm border-2 border-[#4a4a4a] bg-linear-to-b from-[#fafafa] to-[#b5b5b5] checked:from-[#a8a8a8] checked:to-[#f0f0f0]"
              />
              <svg viewBox="0 0 16 16" className="pointer-events-none absolute inset-0 hidden h-4 w-4 peer-checked:block" fill="none" stroke="#000" strokeWidth="1.800" aria-hidden="true">
                <path d="M3.500 9l3 4L12.500 3.500" />
              </svg>
            </span>
          </label>
        ))}
      </div>
      <footer className="flex h-[46px] items-center justify-end border-t border-[#c6c6c6] pr-[13px]">
        <button className="h-[25px] border border-[#a8a8a8] bg-[#e9e9e9] px-[5px] text-[15px] leading-5 text-[#6a6a6a]">Finish Sketch</button>
      </footer>
    </section>
  );
};

// ---------- navigation bar ----------

const nav = 'h-6 w-6';

const NavBar: React.FC = () => (
  <nav className="absolute bottom-2 left-1/2 flex h-[30px] w-[296px] -translate-x-1/2 items-center gap-[6px] bg-[#f2f2f2] pl-[2px]">
    <button aria-label="Orbit" className="flex items-center gap-1">
      <svg viewBox="0 0 24 24" className={nav} fill="none" stroke="#445" aria-hidden="true">
        <path d="M10.500 22V6H8l4-5 4 5h-2.500v16z" fill="#fff" />
        <path d="M8 11C2 12 2 16 8 17.500c6 1 13 0 13-2.500 0-2-3-3-6-3.500M8 15l2 2.500-3 2" />
      </svg>
      <Caret />
    </button>
    <button aria-label="Look At"><LookAtIcon /></button>
    <button aria-label="Pan" className="ml-[6px]">
      <svg viewBox="0 0 24 24" className={nav} fill="#fff" stroke="#444" aria-hidden="true">
        <path d="M9 22C7 19 4 16 3 13c1-1.500 3 0 4.500 2L6 5c1-1.500 2.500-1 2.500 0L10 11V3c0.500-1.500 2.500-1.500 3 0v8l1.500-7c1-1.500 2.500-1 2.500 0.500L16 12l3-5c1-1 2 0 1.500 1C19 13 19 18 17 22z" />
      </svg>
    </button>
    <button aria-label="Zoom" className="ml-[2px]">
      <svg viewBox="0 0 24 24" className={nav} fill="none" aria-hidden="true">
        <path d="M14 14l7 7.500" stroke="#333" strokeWidth="3.500" />
        <circle cx="9" cy="9" r="7.500" fill="#e9f3f2" stroke="#7c8684" />
        <path d="M17 4h5M19.500 1.500v5M17 9h5" stroke="#333" />
      </svg>
    </button>
    <button aria-label="Fit" className="ml-[2px] flex items-center gap-1">
      <svg viewBox="0 0 24 24" className={nav} fill="none" aria-hidden="true">
        <path d="M14 15l7 6.500" stroke="#333" strokeWidth="3.500" />
        <circle cx="9.500" cy="9.500" r="7.500" fill="#e9f3f2" stroke="#7c8684" />
        <rect x="6.500" y="5.500" width="6" height="8" fill="#fff" stroke="#7c8684" />
      </svg>
      <Caret />
    </button>
    <button aria-label="Display Settings" className="flex items-center">
      <svg viewBox="0 0 24 24" className={nav} aria-hidden="true">
        <rect x="2.500" y="1.500" width="19" height="16" fill="#e6e6e6" stroke="#555" />
        <rect x="4.500" y="3.500" width="15" height="12" fill="#8fb2e0" stroke="#46669c" />
        <path d="M9 18h6v2.500l3 2H6l3-2z" fill="#999" stroke="#666" />
      </svg>
      <Caret />
    </button>
    <button aria-label="Grid and Snaps" className="flex items-center gap-px">
      <svg viewBox="0 0 24 24" className={nav} aria-hidden="true">
        <rect x="2.500" y="1.500" width="19" height="21" fill="#dcdde0" stroke="#555" />
        <path d="M6.500 2v20M10.500 2v20M14.500 2v20M18.500 2v20M3 5.500h18M3 9.500h18M3 13.500h18M3 17.500h18" stroke="#777b82" />
      </svg>
      <Caret />
    </button>
    <button aria-label="Viewports" className="flex items-center gap-px">
      <svg viewBox="0 0 24 24" className={nav} aria-hidden="true">
        <rect x="2.500" y="2.500" width="19" height="18" fill="#8fb0dc" stroke="#2f4a7d" />
        <path d="M12 2.500v18M3 11.500h18" stroke="#2f4a7d" strokeWidth="1.500" />
        <path d="M4.500 10V4.500H10M14.500 10V4.500H20M4.500 19v-5.500H10M14.500 19v-5.500H20" stroke="#c4d8f2" fill="none" />
      </svg>
      <Caret />
    </button>
  </nav>
);

const Canvas: React.FC = () => (
  <main className="relative flex-1 overflow-hidden bg-white">
    <Sketch />
    <ViewCube />
    <Browser />
    <Palette />
    <section className="absolute bottom-[6px] left-[5px] flex h-[31px] w-[374px] items-center border-x border-b-2 border-[#c6c6c6] bg-[#f2f2f2] pr-[12px] pl-[30px] text-sm text-[#6a6a6a]">
      <h2 className="flex-1">COMMENTS</h2>
      <RoundToggle plus label="Expand comments" />
    </section>
    <NavBar />
    <button aria-label="Assistant" className="absolute right-[15px] bottom-[9px] flex h-5 w-5 items-center justify-center rounded-full rounded-br-none bg-black">
      <svg viewBox="0 0 12 10" className="h-[10px] w-3" stroke="#fff" aria-hidden="true"><path d="M0.500 6.500l5-3.500M0.500 9l9-8M5 9l6.500-5M9 9l2.500-2M9.500 1.500H12" /></svg>
    </button>
  </main>
);

// ---------- timeline ----------

const SketchFeature: React.FC = () => (
  <svg viewBox="0 0 20 20" className="h-5 w-5" fill="none" aria-hidden="true">
    <path d="M2 1.500h15M1.500 2v15M17 2v7M2 17.500h9" stroke="#555" />
    <path d="M5.500 15V5.500H14C13.500 11 11 14 6 15" stroke="#555" />
    <path d="M0 0h3v3H0zM15.500 0h3v3h-3zM0 16h3v3H0zM4 4.500h3v3H4zM12.500 4.500h3v3h-3z" fill={BLUE} />
    <path d="M11 19l0.500-3.500 5-5 3 2.500-5 5z" fill="#fbb62f" />
    <path d="M16 11l1.500-1.500h1.500L20 11v1.500l-1.500 1z" fill="#ee3a3a" />
  </svg>
);

const ExtrudeFeature: React.FC = () => (
  <svg viewBox="0 0 20 20" className="h-5 w-5" aria-hidden="true">
    <path d="M1 17l0 3h12l4-3v-3z" fill="#a8a8a8" />
    <path d="M1 4h12v13H1z" fill="#62ade6" />
    <path d="M1 4l3-4h12l-3 4z" fill="#8ccbf8" />
    <path d="M13 4l3-4v14l-3 3z" fill="#2f80c4" />
    <path d="M18.500 2v14M17 3.500L18.500 1 20 3.500" stroke="#444" fill="none" />
  </svg>
);

const FilletFeature: React.FC = () => (
  <svg viewBox="0 0 20 20" className="h-5 w-5" aria-hidden="true">
    <path d="M1 5l4-4.500h7C17 3 19 8 19 14l-3 5H1z" fill="#d9d9d9" stroke="#777" />
    <path d="M12 0.500C17 2 19.500 7 19.500 13l-4-1C15 7 13 5 9 4z" fill="#6fb6e6" />
  </svg>
);

const features = ['sketch', 'extrude', 'sketch', 'extrude', 'sketch', 'extrude', 'sketch', 'extrude', 'sketch', 'extrude', 'sketch', 'extrude', 'sketch', 'extrude', 'fillet'];

const playback = [
  { label: 'Go to start', d: 'M1 1h2v16H1zM15 1v16L4 9z' },
  { label: 'Step back', d: 'M13 1v16L1 9zM15 5h2v8h-2z' },
  { label: 'Play', d: 'M2 0v18l14-9z' },
  { label: 'Step forward', d: 'M5 1v16l12-8zM1 5h2v8H1z' },
  { label: 'Go to end', d: 'M15 1h2v16h-2zM3 1v16l11-8z' },
];

const Timeline: React.FC = () => (
  <footer className="flex h-[62px] items-center border-t border-[#d0d0d0] bg-[#f2f2f2] pr-[17px] pl-3">
    <div className="flex w-[142px] justify-between">
      {playback.map((item) => (
        <button key={item.label} aria-label={item.label}>
          <svg viewBox="0 0 18 18" className="h-[17px] w-[17px]" fill="#636363" aria-hidden="true"><path d={item.d} /></svg>
        </button>
      ))}
    </div>
    <ol className="mt-2 ml-6 flex">
      {features.map((feature, i) => (
        <li key={i} className="flex w-[30px] flex-col items-center border-b-2 border-[#c8c8c8]">
          <button aria-label={`${feature} ${i + 1}`} className={`mb-1 block ${i > 2 ? 'opacity-25' : ''}`}>
            {feature === 'sketch' && <SketchFeature />}
            {feature === 'extrude' && <ExtrudeFeature />}
            {feature === 'fillet' && <FilletFeature />}
          </button>
          <span className="h-[6px] w-[2px] bg-[#c8c8c8]" />
        </li>
      ))}
    </ol>
    <svg viewBox="0 0 16 40" className="-ml-[9px] h-10 w-4" fill="#636363" aria-hidden="true">
      <path d="M0 0h16v6l-6 6v28H7V12L0 6z" />
    </svg>
    <button aria-label="Timeline settings" className="ml-auto"><GearIcon className="h-[19px] w-[19px]" /></button>
  </footer>
);

// ---------- desktop taskbar ----------

const TaskApp: React.FC<{ label: string; active?: boolean; running?: boolean; children: React.ReactNode }> = ({ label, active, running, children }) => (
  <button
    aria-label={label}
    className={`relative flex h-[50px] w-[50px] items-center justify-center rounded-md border ${active ? 'border-[#353535] bg-[#292929]' : 'border-transparent'}`}
  >
    {children}
    {active && <span className="absolute bottom-0 h-1 w-5 rounded-full bg-[#25e6f7]" />}
    {running && <span className="absolute bottom-0 h-1 w-2 rounded-full bg-[#9b9b9b]" />}
  </button>
);

const Taskbar: React.FC = () => (
  <div className="relative flex h-[60px] items-center justify-center gap-[5px] border-t border-[#3a3a3a] bg-[#1c1c1c] text-white">
    <TaskApp label="Start">
      <svg viewBox="0 0 29 29" className="h-[29px] w-[29px]" aria-hidden="true">
        <defs>
          <linearGradient id="win" x1="0" x2="1" y1="0" y2="1">
            <stop offset="0" stopColor="#7fe0fb" />
            <stop offset="1" stopColor="#1292f2" />
          </linearGradient>
        </defs>
        <path d="M0 1a1 1 0 011-1h13v14H0zM15 0h13a1 1 0 011 1v13H15zM0 15h14v14H1a1 1 0 01-1-1zM15 15h14v13a1 1 0 01-1 1H15z" fill="url(#win)" />
      </svg>
    </TaskApp>
    <label className="flex h-[47px] w-[276px] items-center rounded-full border border-[#505050] bg-[#3b3b3b] pl-[14px] max-h-10">
      <svg viewBox="0 0 20 20" className="h-5 w-5 shrink-0" fill="none" stroke="#ddd" strokeWidth="2" aria-hidden="true">
        <circle cx="9" cy="8" r="7" />
        <path d="M13.500 13.500L19 19" />
      </svg>
      <input type="search" aria-label="Search" placeholder="Search" className="ml-3 w-[150px] bg-transparent font-['Open_Sans',sans-serif] text-base placeholder:text-[#d5d5d5]" />
      <svg viewBox="0 0 56 38" className="mr-[6px] ml-auto h-[38px] w-14 shrink-0" aria-hidden="true">
        <defs>
          <radialGradient id="glow">
            <stop offset="0.500" stopColor="#b59a6c" />
            <stop offset="1" stopColor="#3b3b3b" />
          </radialGradient>
        </defs>
        <circle cx="19" cy="19" r="19" fill="url(#glow)" />
        <path d="M12 10c-3 8-3 15-7 24 4 3 20 3 24 1-2-6 4-18 0-24z" fill="#6b3a1c" />
        <path d="M18 12c6-3 11 0 12 6 0 5-2 11-6 13l-1 6h-8c2-6-1-18 3-25z" fill="#f3cfa4" />
        <path d="M8 13C7 5 14 1 20 1c8 0 12 5 11 10-6-1-14-1-23 2z" fill="#2d2022" />
        <path d="M21 18h2M27 18h2M24 26h4" stroke="#7a3a24" strokeWidth="1.200" />
        <path d="M37 11h8l-1 8h-6z" fill="#a9865a" />
        <path d="M39 19h4l0 19h-4zM51 18l3 2-11 17-3-1z" fill="#8a5a2b" />
        <path d="M49 19c0-3 2-4 5-5 1 3 0 5-2 7z" fill="#e88a4c" />
      </svg>
    </label>
    <TaskApp label="File Explorer" running>
      <svg viewBox="0 0 30 31" className="h-[31px] w-[30px]" aria-hidden="true">
        <path d="M0 2a2 2 0 012-2h8l4 4h-2L0 8z" fill="#e0a100" />
        <path d="M0 6h11l3-3h14a2 2 0 012 2v24a2 2 0 01-2 2H2a2 2 0 01-2-2z" fill="#ffd04a" />
        <path d="M5 31v-6a3 3 0 013-3h14a3 3 0 013 3v6z" fill="#0f6cbd" />
        <path d="M9 26.500h12" stroke="#063a6b" strokeWidth="2" />
      </svg>
    </TaskApp>
    <TaskApp label="Firefox">
      <svg viewBox="0 0 30 32" className="h-8 w-[30px]" aria-hidden="true">
        <defs>
          <linearGradient id="fox" x1="1" x2="0.200" y1="0" y2="1">
            <stop offset="0.100" stopColor="#fff44f" />
            <stop offset="0.450" stopColor="#ff9a1f" />
            <stop offset="0.800" stopColor="#ff3750" />
            <stop offset="1" stopColor="#e31587" />
          </linearGradient>
        </defs>
        <path d="M20 0c1 4 9 7 9.500 16C30 26 23 32 15 32S0 26 0.500 16C0.500 12 2 8 3.500 5l1.500 3 3-2 1 3c3-2 6-2 8-1 0-3 1-6 3-8z" fill="url(#fox)" />
        <circle cx="15.500" cy="17" r="7" fill="#7b3ff2" />
        <path d="M6 13c3-3 7-2 9-1 2 0 4 1 3 2-1 1-4 1-4 3 0 3 5 4 8 2-2 5-13 6-16-1z" fill="#ff8a16" />
      </svg>
    </TaskApp>
    <TaskApp label="Autodesk Fusion" active>
      <FusionLogo className="h-9 w-7" sub="FUS" />
    </TaskApp>
    <TaskApp label="Photos" running>
      <svg viewBox="0 0 26 30" className="h-[30px] w-[26px]" aria-hidden="true">
        <defs>
          <linearGradient id="photo" x1="0" x2="1" y1="0.500" y2="0.300">
            <stop offset="0.400" stopColor="#1273d6" />
            <stop offset="1" stopColor="#7755b8" />
          </linearGradient>
        </defs>
        <rect width="26" height="30" rx="4" fill="url(#photo)" />
        <path d="M0 26L11 12a2.500 2.500 0 014 0l11 14a4 4 0 01-4 4H4a4 4 0 01-4-4z" fill="#2bb8f2" />
        <path d="M6 30l7-9 7 9z" fill="#0a6cc9" />
        <circle cx="19.500" cy="5" r="2.500" fill="#fff" />
      </svg>
    </TaskApp>

    <div className="absolute top-0 right-[26px] flex h-full items-center pb-[2px] font-['Open_Sans',sans-serif] text-sm">
      <button aria-label="Hidden icons" className="mr-[23px]">
        <svg viewBox="0 0 14 9" className="h-[9px] w-[14px]" fill="none" stroke="#fff" strokeWidth="2" aria-hidden="true"><path d="M1 8l6-6 6 6" /></svg>
      </button>
      <button aria-label="Network and volume" className="flex items-center gap-[10px]">
        <svg viewBox="0 0 20 16" className="h-4 w-5" fill="none" stroke="#fff" strokeWidth="1.500" aria-hidden="true">
          <path d="M0.500 6C6-0.500 14-0.500 19.500 6M3.500 9C7.500 4.500 12.500 4.500 16.500 9M6.500 11.500c2-2.500 5-2.500 7 0" />
          <circle cx="10" cy="13.500" r="1.500" fill="#fff" />
        </svg>
        <svg viewBox="0 0 20 18" className="h-[18px] w-5" fill="none" stroke="#fff" strokeWidth="1.300" aria-hidden="true">
          <path d="M1 6h3.500L9 2v14l-4.500-4H1zM12 6c1.500 2 1.500 4 0 6M14.500 3.500c3 3.500 3 7.500 0 11M17 1c4 5 4 11 0 16" />
        </svg>
      </button>
      <button className="ml-[23px] text-right leading-5">
        <time className="block">5:01 PM</time>
        <time className="block">4/6/2025</time>
      </button>
      <button aria-label="Notifications" className="ml-3">
        <svg viewBox="0 0 17 19" className="h-[19px] w-[17px]" fill="none" stroke="#fff" strokeWidth="1.500" aria-hidden="true">
          <path d="M9 1.500C4 1.500 3 5 3 8v4l-2 3h14l-1.500-3V9M6 15.500c1 3 4 3 5 0M6 7.500h3.500L6 11.500h3.500M11.500 1H16l-4.500 5H16" />
        </svg>
      </button>
    </div>
  </div>
);

const App: React.FC = () => (
  <div className="flex h-screen flex-col overflow-hidden bg-black font-['Liberation_Sans',Arial,sans-serif]">
    {/* Slice of the windows that sit behind this one */}
    <div className="flex h-3 items-end pr-[199px] pl-7">
      <span className="h-[2px] w-9 bg-[#3a3a3a]" />
      <div className="ml-[323px] flex h-full flex-1 items-end rounded-t-xl border-t border-[#333] bg-[#1f1f1f] pl-[9px]">
        <span className="h-1 w-20 rounded-t-sm bg-[#22d8e2]" />
      </div>
    </div>
    <div className="mr-5 flex min-h-0 flex-1 flex-col overflow-hidden rounded-xl">
      <TitleBar />
      <TabBar />
      <Ribbon />
      <Canvas />
      <Timeline />
    </div>
    <Taskbar />
  </div>
);

export default App;
